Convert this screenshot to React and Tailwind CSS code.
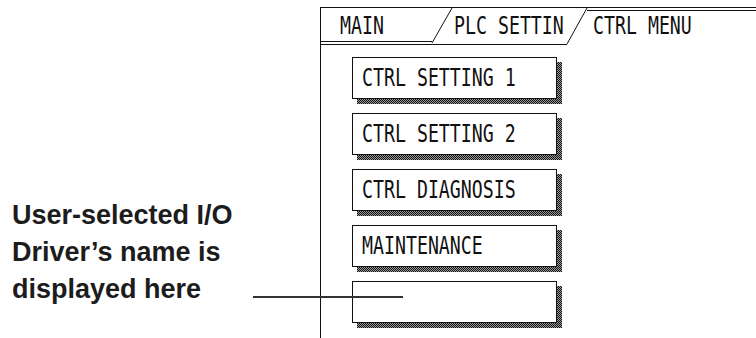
import React from 'react';

const LCD = "font-['DejaVu_Sans_Mono',monospace]";

function Lcd({ children }) {
  return (
    <span className={`${LCD} inline-block origin-left scale-x-[0.76] whitespace-pre text-[24px] leading-none text-[#111]`}>
      {children}
    </span>
  );
}

function MenuButton({ label }) {
  return (
    <div className="relative w-[205px] h-[42px]">
      {/* dithered drop shadow */}
      <div className="absolute top-[5px] left-[5px] w-full h-full bg-[image:repeating-conic-gradient(#111_0_25%,#9a9a9a_0_50%)] bg-[length:2px_2px]" />
      <div className="relative h-full flex items-center pl-[9px] bg-white border border-[#111]">
        {label && <Lcd>{label}</Lcd>}
      </div>
    </div>
  );
}

function TabRow() {
  return (
    <div className="relative h-[38px] flex items-center">
      <svg className="absolute left-[-1px] top-0" width="437" height="38" viewBox="0 0 437 38" fill="none" stroke="#111" strokeWidth="1">
        <path d="M0 0.5H437" />
        <path d="M267 3.5H437" />
        <path d="M0 34.5H112" />
        <path d="M0 37.5H247" />
        <path d="M112 36L132 1" />
        <path d="M247 37L267 1" />
      </svg>
      <div className="relative flex w-full pt-[2px]">
        <div className="w-[132px] pl-[19px]"><Lcd>MAIN</Lcd></div>
        <div className="w-[140px] pl-[1px]"><Lcd>PLC SETTIN</Lcd></div>
        <div className="flex-1"><Lcd>CTRL MENU</Lcd></div>
      </div>
    </div>
  );
}

export default function App() {
  const items = ['CTRL SETTING 1', 'CTRL SETTING 2', 'CTRL DIAGNOSIS', 'MAINTENANCE', ''];

  return (
    <div className="relative w-[756px] h-[338px] bg-white overflow-hidden flex">
      {/* callout text */}
      <div className="w-[320px] flex-shrink-0 pl-[12px] pt-[197px]">
        <p className="font-['Liberation_Sans',Arial,sans-serif] font-bold text-[27px] leading-[37px] text-[#1c1c1c]">
          User-selected I/O<br />
          Driver’s name is<br />
          displayed here
        </p>
      </div>

      {/* HMI screen */}
      <div className="mt-[7px] flex-1 border-l border-[#111] flex flex-col">
        <TabRow />
        <div className="flex flex-col gap-[14px] pl-[31px] pt-[12px]">
          {items.map((t, i) => (
            <MenuButton key={i} label={t} />
          ))}
        </div>
      </div>

      {/* pointer line */}
      <div className="absolute left-[253px] top-[296px] w-[150px] h-[2px] bg-[#333] z-20" />
    </div>
  );
}
